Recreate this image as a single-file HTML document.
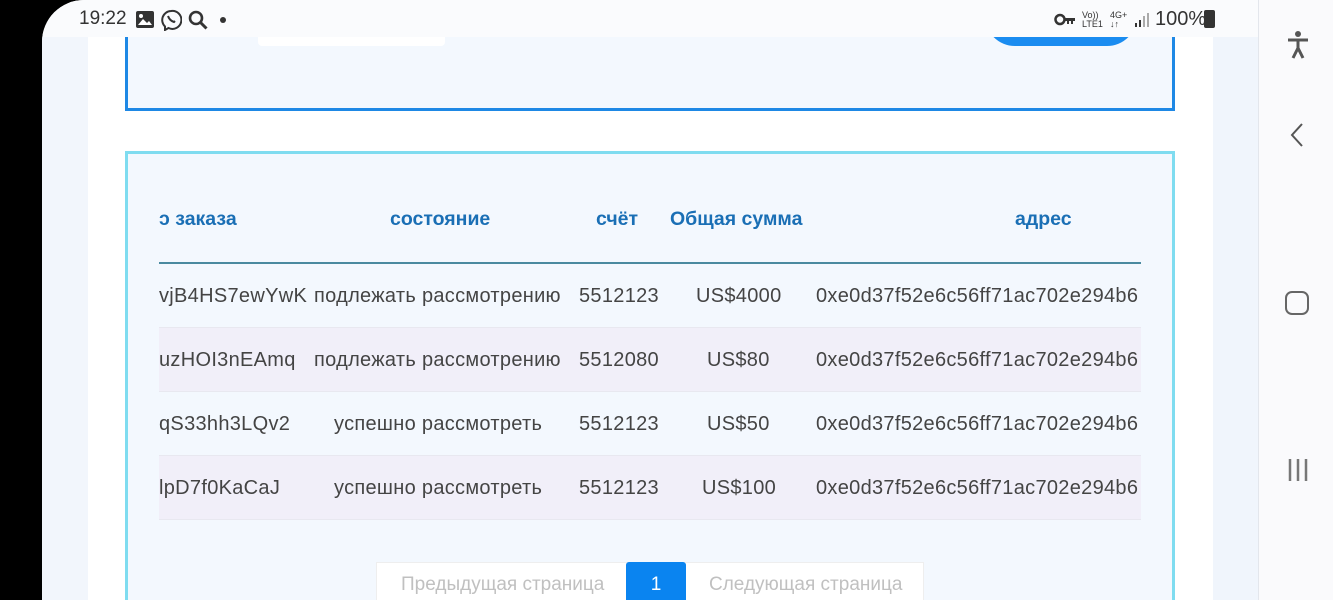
<!DOCTYPE html>
<html><head><meta charset="utf-8"><style>
*{margin:0;padding:0;box-sizing:border-box}
body{width:1333px;height:600px;overflow:hidden;background:#000;font-family:"Liberation Sans","DejaVu Sans",sans-serif;position:relative}
.screen{position:absolute;left:42px;top:0;width:1291px;height:600px;background:#fafbfd;border-top-left-radius:42px;overflow:hidden}
.status{position:absolute;left:0;top:0;width:1216px;height:37px;background:#fafbfd;font-size:19px;color:#333}
.lstrip{position:absolute;left:0;top:37px;width:46px;height:563px;background:#f2f6fc}
.white{position:absolute;left:46px;top:37px;width:1125px;height:563px;background:#fff}
.rstrip{position:absolute;left:1171px;top:37px;width:45px;height:563px;background:#f0f5fc}
.nav{position:absolute;left:1216px;top:0;width:75px;height:600px;background:#fafafc;border-left:1px solid #e3e6ec}
.card1{position:absolute;left:83px;top:-10px;width:1050px;height:121px;border:3px solid #1e88e5;border-top:none;background:#f3f8fe}
.card2{position:absolute;left:83px;top:151px;width:1050px;height:470px;border:3px solid #7fdcf0;background:#f3f8fe;overflow:hidden}
.h{position:absolute;top:54px;font-weight:bold;font-size:19.5px;color:#1a6fb5;white-space:nowrap}
.row{position:absolute;left:31px;width:982px;height:64px;font-size:20px;letter-spacing:0.3px;color:#444;white-space:nowrap;overflow:hidden;border-bottom:1px solid #e8e8f0}
.row span{position:absolute;top:21px}
.lav{background:#f1eff9}
</style></head><body>
<div class="screen">
 <div class="lstrip"></div><div class="white"></div><div class="rstrip"></div>
 <div class="card1">
  <div style="position:absolute;left:130px;top:38px;width:187px;height:18px;background:#fff;border-radius:4px"></div>
  <div style="position:absolute;left:857px;top:20px;width:152px;height:36px;background:#1a8cf0;border-radius:0 0 30px 30px"></div>
 </div>
 <div class="card2">
  <div class="h" style="left:31px">ɔ заказа</div>
  <div class="h" style="left:262px">состояние</div>
  <div class="h" style="left:468px">счёт</div>
  <div class="h" style="left:542px">Общая сумма</div>
  <div class="h" style="left:887px">адрес</div>
  <div style="position:absolute;left:31px;top:108px;width:982px;height:2px;background:#4a8aa0"></div>
  <div class="row" style="top:110px"><span style="left:0">vjB4HS7ewYwK</span><span style="left:155px">подлежать рассмотрению</span><span style="left:420px">5512123</span><span style="left:537px">US$4000</span><span style="left:657px">0xe0d37f52e6c56ff71ac702e294b6</span></div>
  <div class="row lav" style="top:174px"><span style="left:0">uzHOI3nEAmq</span><span style="left:155px">подлежать рассмотрению</span><span style="left:420px">5512080</span><span style="left:548px">US$80</span><span style="left:657px">0xe0d37f52e6c56ff71ac702e294b6</span></div>
  <div class="row" style="top:238px"><span style="left:0">qS33hh3LQv2</span><span style="left:175px">успешно рассмотреть</span><span style="left:420px">5512123</span><span style="left:548px">US$50</span><span style="left:657px">0xe0d37f52e6c56ff71ac702e294b6</span></div>
  <div class="row lav" style="top:302px"><span style="left:0">lpD7f0KaCaJ</span><span style="left:175px">успешно рассмотреть</span><span style="left:420px">5512123</span><span style="left:543px">US$100</span><span style="left:657px">0xe0d37f52e6c56ff71ac702e294b6</span></div>
  <div style="position:absolute;left:248px;top:408px;width:548px;height:50px;background:#fff;border:1px solid #eee;font-size:19px;color:#c0c0c0">
   <span style="position:absolute;left:24px;top:11px">Предыдущая страница</span>
   <div style="position:absolute;left:249px;top:-1px;width:60px;height:52px;background:#0a84f0;border-radius:3px 3px 0 0;color:#fff;text-align:center;padding-top:12px">1</div>
   <span style="position:absolute;left:332px;top:11px">Следующая страница</span>
  </div>
 </div>
 <div class="status">
  <span style="position:absolute;left:37px;top:8px;font-size:19px">19:22</span>
  <svg style="position:absolute;left:94px;top:11px" width="18" height="17" viewBox="0 0 18 17"><rect x="0" y="0" width="18" height="17" rx="2" fill="#333"/><path d="M2 14l5-6 4 4 2-2 3 4z" fill="#fff"/><circle cx="5" cy="5" r="2" fill="#fff"/></svg>
  <svg style="position:absolute;left:118px;top:9px" width="22" height="22" viewBox="0 0 22 22"><path d="M11 2a9 9 0 0 0-6 15.5V21l3.5-2A9 9 0 1 0 11 2z" fill="none" stroke="#333" stroke-width="2"/><path d="M8 7c1 3 3 5 6 6l1-1" stroke="#333" stroke-width="2" fill="none"/></svg>
  <svg style="position:absolute;left:145px;top:9px" width="22" height="22" viewBox="0 0 22 22"><circle cx="9" cy="9" r="6" fill="none" stroke="#333" stroke-width="2.6"/><path d="M13.5 13.5l6 6" stroke="#333" stroke-width="3"/></svg>
  <div style="position:absolute;left:178px;top:17px;width:6px;height:6px;border-radius:50%;background:#333"></div>
  <svg style="position:absolute;left:1012px;top:13px" width="22" height="13" viewBox="0 0 22 13"><circle cx="6" cy="6.5" r="4.5" fill="none" stroke="#333" stroke-width="2.5"/><path d="M10 5h11v3h-2v3h-2V8h-2v3h-2V8h-3z" fill="#333"/></svg>
  <span style="position:absolute;left:1040px;top:11px;font-size:9px;line-height:9px">Vo))<br>LTE1</span>
  <span style="position:absolute;left:1068px;top:11px;font-size:9px;line-height:9px">4G+<br>↓↑</span>
  <svg style="position:absolute;left:1092px;top:12px" width="16" height="16"><rect x="1" y="11" width="2" height="4" fill="#333"/><rect x="5" y="8" width="2" height="7" fill="#333"/><rect x="9" y="4" width="2" height="11" fill="#aaa"/><rect x="13" y="1" width="2" height="14" fill="#aaa"/></svg>
  <span style="position:absolute;left:1113px;top:8px;font-size:20px">100%</span>
  <div style="position:absolute;left:1162px;top:10px;width:11px;height:18px;background:#333;border-radius:2px"></div>
 </div>
 <div class="nav">
  <svg style="position:absolute;left:27px;top:30px" width="24" height="30" viewBox="0 0 24 30"><circle cx="12" cy="4" r="3" fill="#555"/><path d="M2 10h20M12 10v8M12 18l-5 10M12 18l5 10" stroke="#555" stroke-width="3" fill="none"/></svg>
  <svg style="position:absolute;left:30px;top:122px" width="16" height="26"><path d="M13 2L3 13l10 11" stroke="#555" stroke-width="2" fill="none"/></svg>
  <div style="position:absolute;left:26px;top:291px;width:24px;height:24px;border:2.5px solid #666;border-radius:7px"></div>
  <svg style="position:absolute;left:28px;top:458px" width="22" height="24"><path d="M3 1v22M11 1v22M19 1v22" stroke="#777" stroke-width="2.5"/></svg>
 </div>
</div>
</body></html>
